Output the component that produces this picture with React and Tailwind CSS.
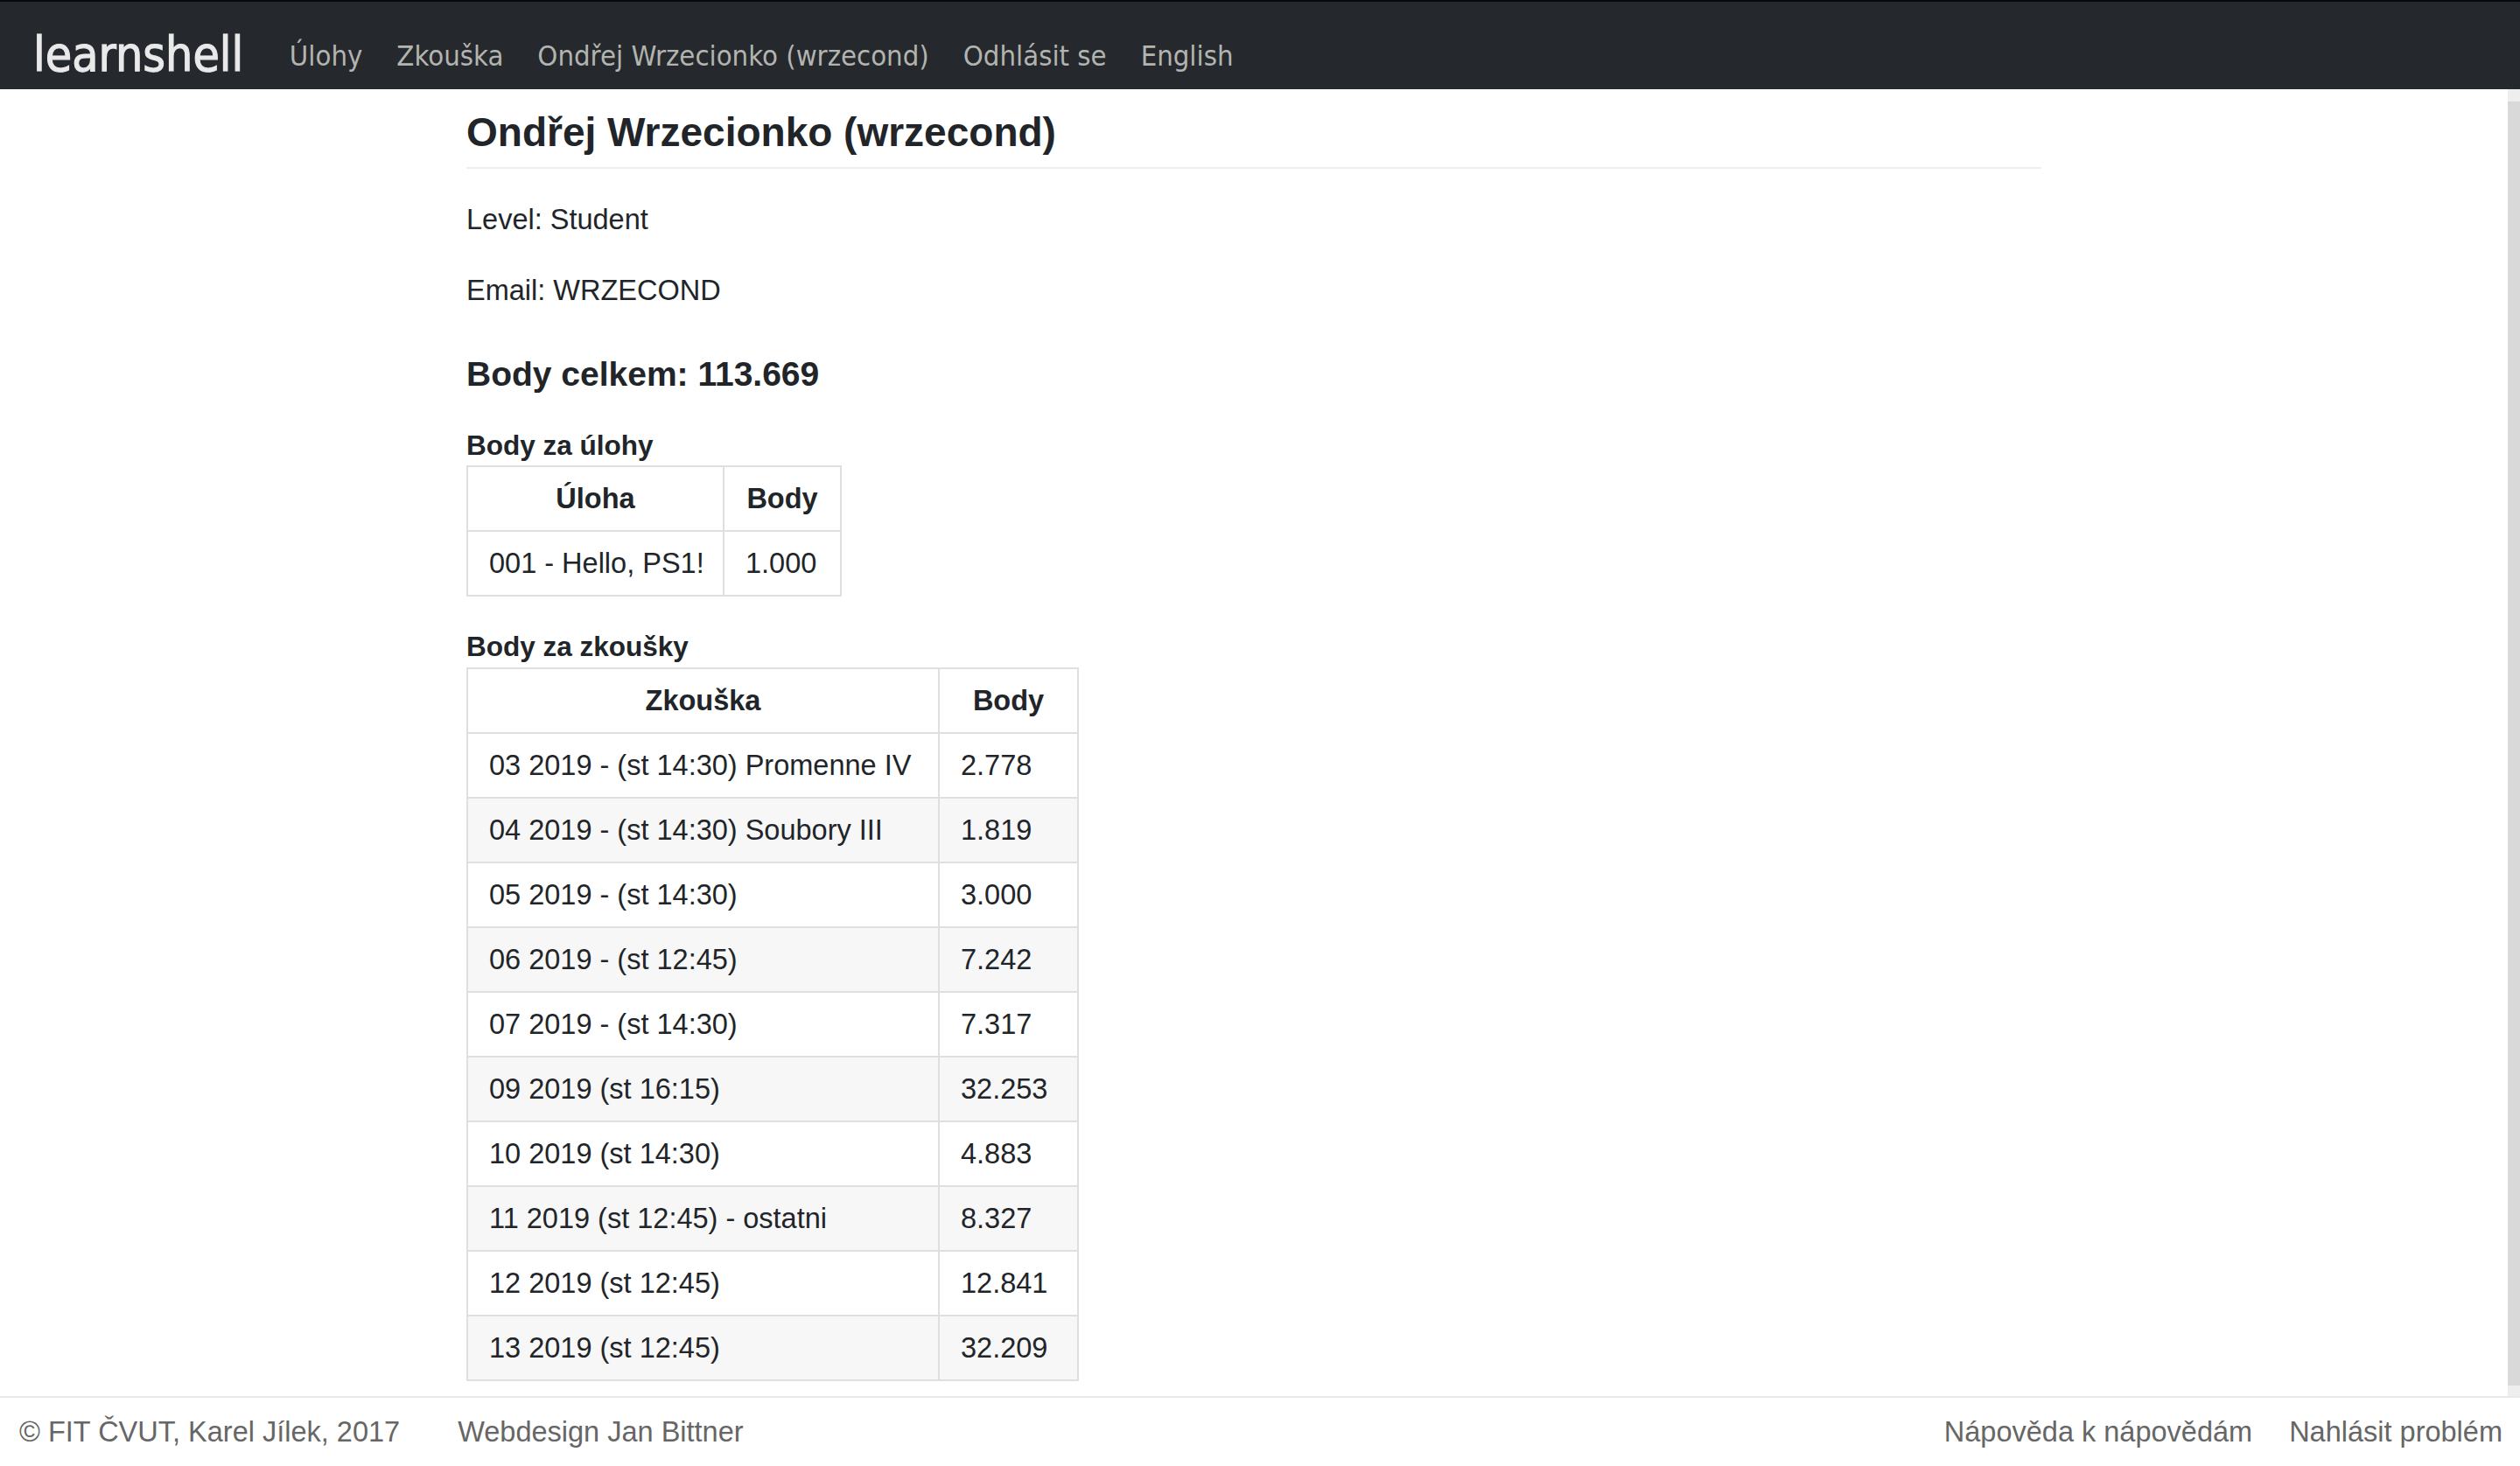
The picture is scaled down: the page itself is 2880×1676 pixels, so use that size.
import React from "react";

const exams = [
  ["03 2019 - (st 14:30) Promenne IV", "2.778"],
  ["04 2019 - (st 14:30) Soubory III", "1.819"],
  ["05 2019 - (st 14:30)", "3.000"],
  ["06 2019 - (st 12:45)", "7.242"],
  ["07 2019 - (st 14:30)", "7.317"],
  ["09 2019 (st 16:15)", "32.253"],
  ["10 2019 (st 14:30)", "4.883"],
  ["11 2019 (st 12:45) - ostatni", "8.327"],
  ["12 2019 (st 12:45)", "12.841"],
  ["13 2019 (st 12:45)", "32.209"],
];

const navFont = { fontFamily: '"DejaVu Sans Condensed", "DejaVu Sans", sans-serif' };

function Table({ widths, head, rows }) {
  return (
    <table
      className="table-fixed border-collapse text-[32.5px] leading-[48px] text-[#212529]"
      style={{ width: widths[0] + widths[1] }}
    >
      <thead>
        <tr>
          <th className="border-2 border-[#dfdfdf] px-[24px] py-[12px] text-center font-bold" style={{ width: widths[0] }}>
            {head[0]}
          </th>
          <th className="border-2 border-[#dfdfdf] px-[24px] py-[12px] text-center font-bold" style={{ width: widths[1] }}>
            {head[1]}
          </th>
        </tr>
      </thead>
      <tbody>
        {rows.map((r, i) => (
          <tr key={i} className={i % 2 === 1 ? "bg-[#f7f7f7]" : "bg-white"}>
            <td className="whitespace-nowrap border-2 border-[#dfdfdf] px-[24px] py-[12px] text-left">{r[0]}</td>
            <td className="whitespace-nowrap border-2 border-[#dfdfdf] px-[24px] py-[12px] text-left">{r[1]}</td>
          </tr>
        ))}
      </tbody>
    </table>
  );
}

export default function App() {
  return (
    <div
      className="flex h-[1676px] w-[2880px] flex-col overflow-hidden bg-white text-[#212529]"
      style={{ fontFamily: '"Liberation Sans", Arial, sans-serif' }}
    >
      <nav className="flex h-[102px] shrink-0 items-start border-t-2 border-[#0a0a0a] bg-[#25282d] pl-[38px] pt-[33px]" style={navFont}>
        <span className="mr-[33px] text-[55px] leading-none text-[#e9e9e9]" style={{ WebkitTextStroke: "1.1px #e9e9e9" }}>
          learnshell
        </span>
        {["Úlohy", "Zkouška", "Ondřej Wrzecionko (wrzecond)", "Odhlásit se", "English"].map((t) => (
          <a key={t} className="mt-[5px] px-[19.5px] text-[32.6px] leading-[48px] text-[#b3b4af]">
            {t}
          </a>
        ))}
      </nav>

      <div className="flex min-h-0 flex-1">
        <main className="min-w-0 flex-1 overflow-hidden">
          <div className="mx-auto w-[1800px]">
            <h1 className="mt-[21.5px] border-b-2 border-[#eeeeee] pb-[12.5px] text-[46px] font-bold leading-[1.2]">
              Ondřej Wrzecionko (wrzecond)
            </h1>
            <p className="mt-[33.5px] text-[32.5px] leading-[48px]">Level: Student</p>
            <p className="mt-[33px] text-[32.5px] leading-[48px]">Email: WRZECOND</p>
            <h2 className="mt-[49.3px] text-[39px] font-bold leading-[1.2]">Body celkem: 113.669</h2>
            <h3 className="mb-[3.2px] mt-[39.2px] text-[31.5px] font-bold leading-[1.2]">Body za úlohy</h3>
            <Table widths={[293, 134]} head={["Úloha", "Body"]} rows={[["001 - Hello, PS1!", "1.000"]]} />
            <h3 className="mb-[4.2px] mt-[39px] text-[31.5px] font-bold leading-[1.2]">Body za zkoušky</h3>
            <Table widths={[539, 159]} head={["Zkouška", "Body"]} rows={exams} />
          </div>
        </main>
        <div className="flex w-[14px] shrink-0 flex-col bg-[#eeeeee] pb-[12px] pt-[14px]">
          <div className="flex-1 bg-[#d9d9d9]" />
        </div>
      </div>

      <footer className="flex h-[80px] shrink-0 items-center justify-between border-t-2 border-[#e9e9e9] pl-[22px] pr-[20px] text-[32.5px] leading-[48px] text-[#666666]">
        <div className="flex gap-[66px]">
          <span>© FIT ČVUT, Karel Jílek, 2017</span>
          <span>Webdesign Jan Bittner</span>
        </div>
        <div className="flex gap-[42px]">
          <span>Nápověda k nápovědám</span>
          <span>Nahlásit problém</span>
        </div>
      </footer>
    </div>
  );
}
